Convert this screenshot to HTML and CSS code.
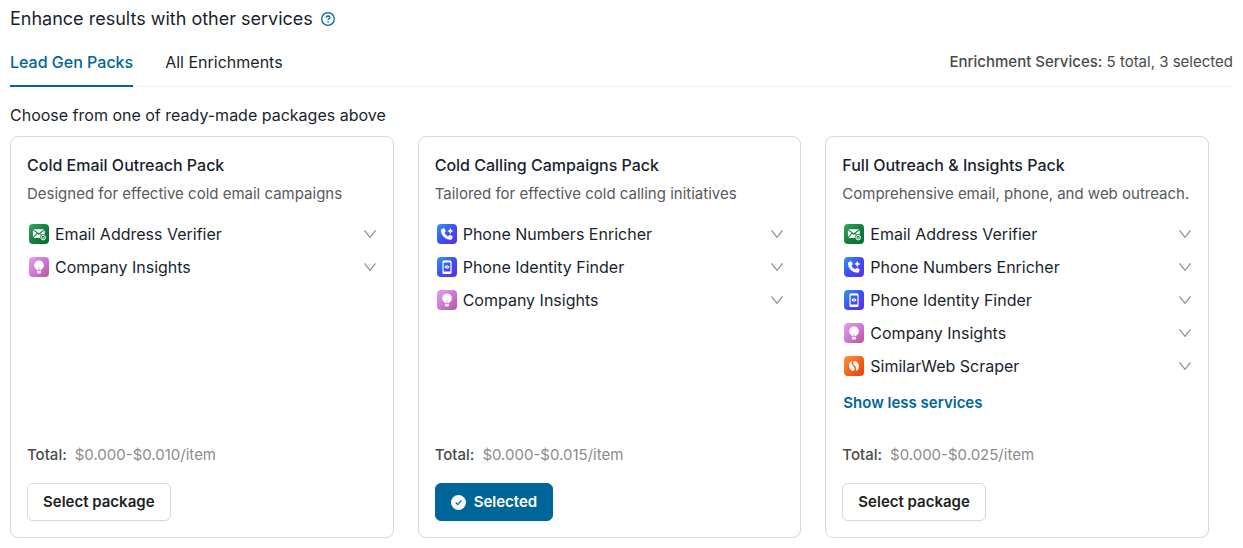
FILE: index.html
```html
<!DOCTYPE html>
<html lang="en">
<head>
<meta charset="utf-8">
<meta name="viewport" content="width=device-width, initial-scale=1">
<title>Enhance results</title>
<link rel="stylesheet" href="styles.css">
</head>
<body>
<svg class="sprite" aria-hidden="true">
  <defs>
    <linearGradient id="g-green" x1="0" y1="0" x2="1" y2="1"><stop offset="0" stop-color="#35a85c"/><stop offset=".5" stop-color="#15803f"/><stop offset="1" stop-color="#056a36"/></linearGradient>
    <linearGradient id="g-blue" x1="0" y1="0" x2="1" y2="1"><stop offset="0" stop-color="#2b9bee"/><stop offset=".5" stop-color="#4050ee"/><stop offset="1" stop-color="#5a2cf0"/></linearGradient>
    <linearGradient id="g-pink" x1="0" y1="0" x2="1" y2="1"><stop offset="0" stop-color="#e3a0ee"/><stop offset=".5" stop-color="#ce78d6"/><stop offset="1" stop-color="#bd5296"/></linearGradient>
    <linearGradient id="g-orange" x1="0" y1="0" x2="1" y2="1"><stop offset="0" stop-color="#ff9440"/><stop offset=".5" stop-color="#f4651a"/><stop offset="1" stop-color="#e63c10"/></linearGradient>
    <symbol id="i-email" viewBox="0 0 20 20">
      <rect width="20" height="20" rx="4" fill="url(#g-green)"/>
      <path d="M4.400 5.200h10.800L9.800 9.300zM3.900 6.200l3.600 2.900-3.600 4.200zM15.700 6.200v4.200c-1-.3-2.100-.2-3 .2l-1-1.300zM8.300 9.800l1.500 1.100 1.200-.9.900 1.100c-.8.700-1.200 1.700-1.200 2.900H4.600z" fill="#fff"/>
      <circle cx="14.200" cy="13.600" r="2.300" fill="#15803f" stroke="#fff" stroke-width="1"/>
      <path d="M13 13.500l1 1 1.500-1.800" fill="none" stroke="#fff" stroke-width="1"/>
    </symbol>
    <symbol id="i-phone" viewBox="0 0 20 20">
      <rect width="20" height="20" rx="4" fill="url(#g-blue)"/>
      <path d="M4.900 5l1.700-.7c.5-.2.9 0 1.100.4l.9 2.100c.2.4 0 .8-.2 1l-.9.900c.8 1.700 1.900 2.700 3.600 3.500l.9-1c.3-.3.6-.4 1-.2l2.200 1c.4.2.6.6.4 1l-.5 1.700c-.2.700-.7 1-1.300 1C8.200 15.700 4 11.700 4 6.300c0-.6.2-1 .9-1.300z" fill="#fff"/>
      <path d="M13.300 3.800l1 2.200 2.200 1-2.200 1-1 2.200-1-2.200-2.200-1 2.200-1z" fill="#fff"/>
    </symbol>
    <symbol id="i-identity" viewBox="0 0 20 20">
      <rect width="20" height="20" rx="4" fill="url(#g-blue)"/>
      <rect x="6" y="4" width="8" height="12.500" rx="1" fill="none" stroke="#fff" stroke-width="1.200"/>
      <path d="M6 4.700h8M6 15.500h8" stroke="#fff" stroke-width="1.800"/>
      <path d="M7.300 10q2.700-3.600 5.400 0q-2.700 3.600-5.400 0z" fill="#fff"/>
      <circle cx="10" cy="10" r=".7" fill="#4050ee"/>
    </symbol>
    <symbol id="i-company" viewBox="0 0 20 20">
      <rect width="20" height="20" rx="4" fill="url(#g-pink)"/>
      <path d="M10 3.500a4.700 4.700 0 0 0-2.900 8.400c.5.400.8.800.8 1.400h4.200c0-.6.3-1 .8-1.400A4.700 4.700 0 0 0 10 3.500z" fill="#fff"/>
      <path d="M8 14.100h4v1.200c0 .8-.6 1.300-1.300 1.300H9.300c-.7 0-1.300-.5-1.300-1.300z" fill="#fff"/>
      <path d="M10 13.300v-2.600" stroke="#ce78d6" stroke-width=".8"/>
    </symbol>
    <symbol id="i-similar" viewBox="0 0 20 20">
      <rect width="20" height="20" rx="4" fill="url(#g-orange)"/>
      <path d="M8.200 5C4.600 6 3.800 11.200 7.100 14.100c.9.900 2.200 1.200 2.900.4 1.500-1.900.3-3-1.100-4.700C7.500 8.200 7.400 6.600 8.200 5z" fill="#fff"/>
      <path d="M11.800 15c3.600-1 4.400-6.200 1.100-9.100-.9-.9-2.200-1.200-2.900-.4-1.500 1.900-.3 3 1.100 4.700 1.400 1.600 1.500 3.200.7 4.800z" fill="#fff"/>
    </symbol>
    <symbol id="i-chevron" viewBox="0 0 14 10">
      <path d="M1.500 1.300L7 8.300l5.500-7" fill="none" stroke="#8c8c8c" stroke-width="1.200"/>
    </symbol>
  </defs>
</svg>

<main class="page">
  <header class="heading">
    <h1 class="title">Enhance results with other services</h1>
    <button class="help" type="button" aria-label="Help">
      <svg class="help-icon" viewBox="0 0 14 14" fill="none" stroke="currentColor" stroke-width="1.300"><circle cx="7" cy="7" r="6.300"/><path d="M5.100 5.700c0-1 .8-1.700 1.900-1.700s1.900.7 1.900 1.600c0 1.100-1.900 1.200-1.900 2.500"/><path d="M7 9.100v1.300"/></svg>
    </button>
  </header>

  <div class="tabbar">
    <div class="tabs" role="tablist">
      <button class="tab tab-active" type="button" role="tab" aria-selected="true">Lead Gen Packs</button>
      <button class="tab" type="button" role="tab" aria-selected="false">All Enrichments</button>
    </div>
    <p class="summary"><span class="strong">Enrichment Services:</span> 5 total, 3 selected</p>
  </div>

  <p class="intro">Choose from one of ready-made packages above</p>

  <section class="packs">
    <article class="pack">
      <h2 class="pack-title">Cold Email Outreach Pack</h2>
      <p class="pack-desc">Designed for effective cold email campaigns</p>
      <div class="services">
        <button class="service" type="button" aria-expanded="false"><svg class="service-icon"><use href="#i-email"/></svg><span class="service-name">Email Address Verifier</span><svg class="chevron"><use href="#i-chevron"/></svg></button>
        <button class="service" type="button" aria-expanded="false"><svg class="service-icon"><use href="#i-company"/></svg><span class="service-name">Company Insights</span><svg class="chevron"><use href="#i-chevron"/></svg></button>
      </div>
      <p class="total"><span class="strong">Total:</span><span class="price">$0.000-$0.010/item</span></p>
      <button class="btn" type="button">Select package</button>
    </article>

    <article class="pack">
      <h2 class="pack-title">Cold Calling Campaigns Pack</h2>
      <p class="pack-desc">Tailored for effective cold calling initiatives</p>
      <div class="services">
        <button class="service" type="button" aria-expanded="false"><svg class="service-icon"><use href="#i-phone"/></svg><span class="service-name">Phone Numbers Enricher</span><svg class="chevron"><use href="#i-chevron"/></svg></button>
        <button class="service" type="button" aria-expanded="false"><svg class="service-icon"><use href="#i-identity"/></svg><span class="service-name">Phone Identity Finder</span><svg class="chevron"><use href="#i-chevron"/></svg></button>
        <button class="service" type="button" aria-expanded="false"><svg class="service-icon"><use href="#i-company"/></svg><span class="service-name">Company Insights</span><svg class="chevron"><use href="#i-chevron"/></svg></button>
      </div>
      <p class="total"><span class="strong">Total:</span><span class="price">$0.000-$0.015/item</span></p>
      <button class="btn btn-primary" type="button" aria-pressed="true">
        <svg class="check" viewBox="0 0 16 16"><circle cx="8" cy="8" r="8" fill="#fff"/><path d="M5 8l2.200 2.300L11 5.700" fill="none" stroke="#006699" stroke-width="1.300"/></svg>
        Selected
      </button>
    </article>

    <article class="pack">
      <h2 class="pack-title">Full Outreach &amp; Insights Pack</h2>
      <p class="pack-desc">Comprehensive email, phone, and web outreach.</p>
      <div class="services">
        <button class="service" type="button" aria-expanded="false"><svg class="service-icon"><use href="#i-email"/></svg><span class="service-name">Email Address Verifier</span><svg class="chevron"><use href="#i-chevron"/></svg></button>
        <button class="service" type="button" aria-expanded="false"><svg class="service-icon"><use href="#i-phone"/></svg><span class="service-name">Phone Numbers Enricher</span><svg class="chevron"><use href="#i-chevron"/></svg></button>
        <button class="service" type="button" aria-expanded="false"><svg class="service-icon"><use href="#i-identity"/></svg><span class="service-name">Phone Identity Finder</span><svg class="chevron"><use href="#i-chevron"/></svg></button>
        <button class="service" type="button" aria-expanded="false"><svg class="service-icon"><use href="#i-company"/></svg><span class="service-name">Company Insights</span><svg class="chevron"><use href="#i-chevron"/></svg></button>
        <button class="service" type="button" aria-expanded="false"><svg class="service-icon"><use href="#i-similar"/></svg><span class="service-name">SimilarWeb Scraper</span><svg class="chevron"><use href="#i-chevron"/></svg></button>
        <button class="toggle" type="button">Show less services</button>
      </div>
      <p class="total"><span class="strong">Total:</span><span class="price">$0.000-$0.025/item</span></p>
      <button class="btn" type="button">Select package</button>
    </article>
  </section>
</main>
</body>
</html>
```
FILE: styles.css
```css
* {
  box-sizing: border-box;
}

body {
  margin: 0;
  background: #fff;
  color: #1a1f2e;
  font: 400 16px/24px Inter, "Liberation Sans", sans-serif;
}

h1,
h2,
p {
  margin: 0;
}

button {
  padding: 0;
  border: 0;
  background: none;
  color: inherit;
  font: inherit;
  cursor: pointer;
}

svg {
  display: block;
  flex: none;
}

.sprite {
  position: absolute;
  width: 0;
  height: 0;
}

.page {
  padding: 7px 10px 10px;
}

.heading {
  display: flex;
  align-items: center;
  gap: 8px;
}

.title {
  font-size: 18px;
  font-weight: 400;
  line-height: 24px;
}

.help {
  color: #006699;
}

.help-icon {
  width: 14px;
  height: 14px;
}

.tabbar {
  display: flex;
  justify-content: space-between;
  margin-top: 8px;
  border-bottom: 1px solid #f0f0f0;
}

.tabs {
  display: flex;
  gap: 32px;
  margin-bottom: -1px;
}

.tab {
  padding: 11px 0;
  border-bottom: 2px solid transparent;
}

.tab-active {
  border-color: #006699;
  color: #006699;
  font-weight: 500;
}

.summary {
  padding-top: 11px;
  color: #4a4a4a;
  font-size: 15px;
}

.strong {
  font-weight: 500;
}

.intro {
  margin-top: 16px;
}

.packs {
  display: grid;
  grid-template-columns: repeat(3, 1fr);
  gap: 24px;
  margin: 9px 24px 0 0;
}

.pack {
  display: flex;
  flex-direction: column;
  align-items: flex-start;
  padding: 16px;
  border: 1px solid #d9d9d9;
  border-radius: 8px;
}

.pack-title {
  font-size: 16px;
  font-weight: 500;
  line-height: 24px;
}

.pack-desc {
  margin-top: 5px;
  color: #595959;
  font-size: 15px;
  white-space: nowrap;
}

.services {
  display: flex;
  flex: 1;
  flex-direction: column;
  align-self: stretch;
  align-items: flex-start;
  margin-top: 11px;
}

.service {
  display: flex;
  align-items: center;
  align-self: stretch;
  gap: 6px;
  height: 33px;
  padding: 0 0 0 2px;
  text-align: left;
}

.service-icon {
  width: 20px;
  height: 20px;
}

.service-name {
  flex: 1;
}

.chevron {
  width: 14px;
  height: 10px;
}

.toggle {
  margin: 9px 0 28px 1px;
  color: #006699;
  font-size: 15px;
  font-weight: 600;
}

.total {
  display: flex;
  gap: 8px;
  color: #4a4a4a;
  font-size: 15px;
}

.price {
  color: #8c8c8c;
}

.btn {
  display: flex;
  align-items: center;
  gap: 8px;
  height: 38px;
  margin-top: 16px;
  padding: 0 15px;
  border: 1px solid #d9d9d9;
  border-radius: 6px;
  background: #fff;
  box-shadow: 0 2px 0 rgba(0, 0, 0, 0.02);
  color: #1f1f1f;
  font-size: 15px;
  font-weight: 600;
}

.btn-primary {
  border-color: #006699;
  background: #006699;
  color: #fff;
}

.check {
  width: 15px;
  height: 15px;
}
```
